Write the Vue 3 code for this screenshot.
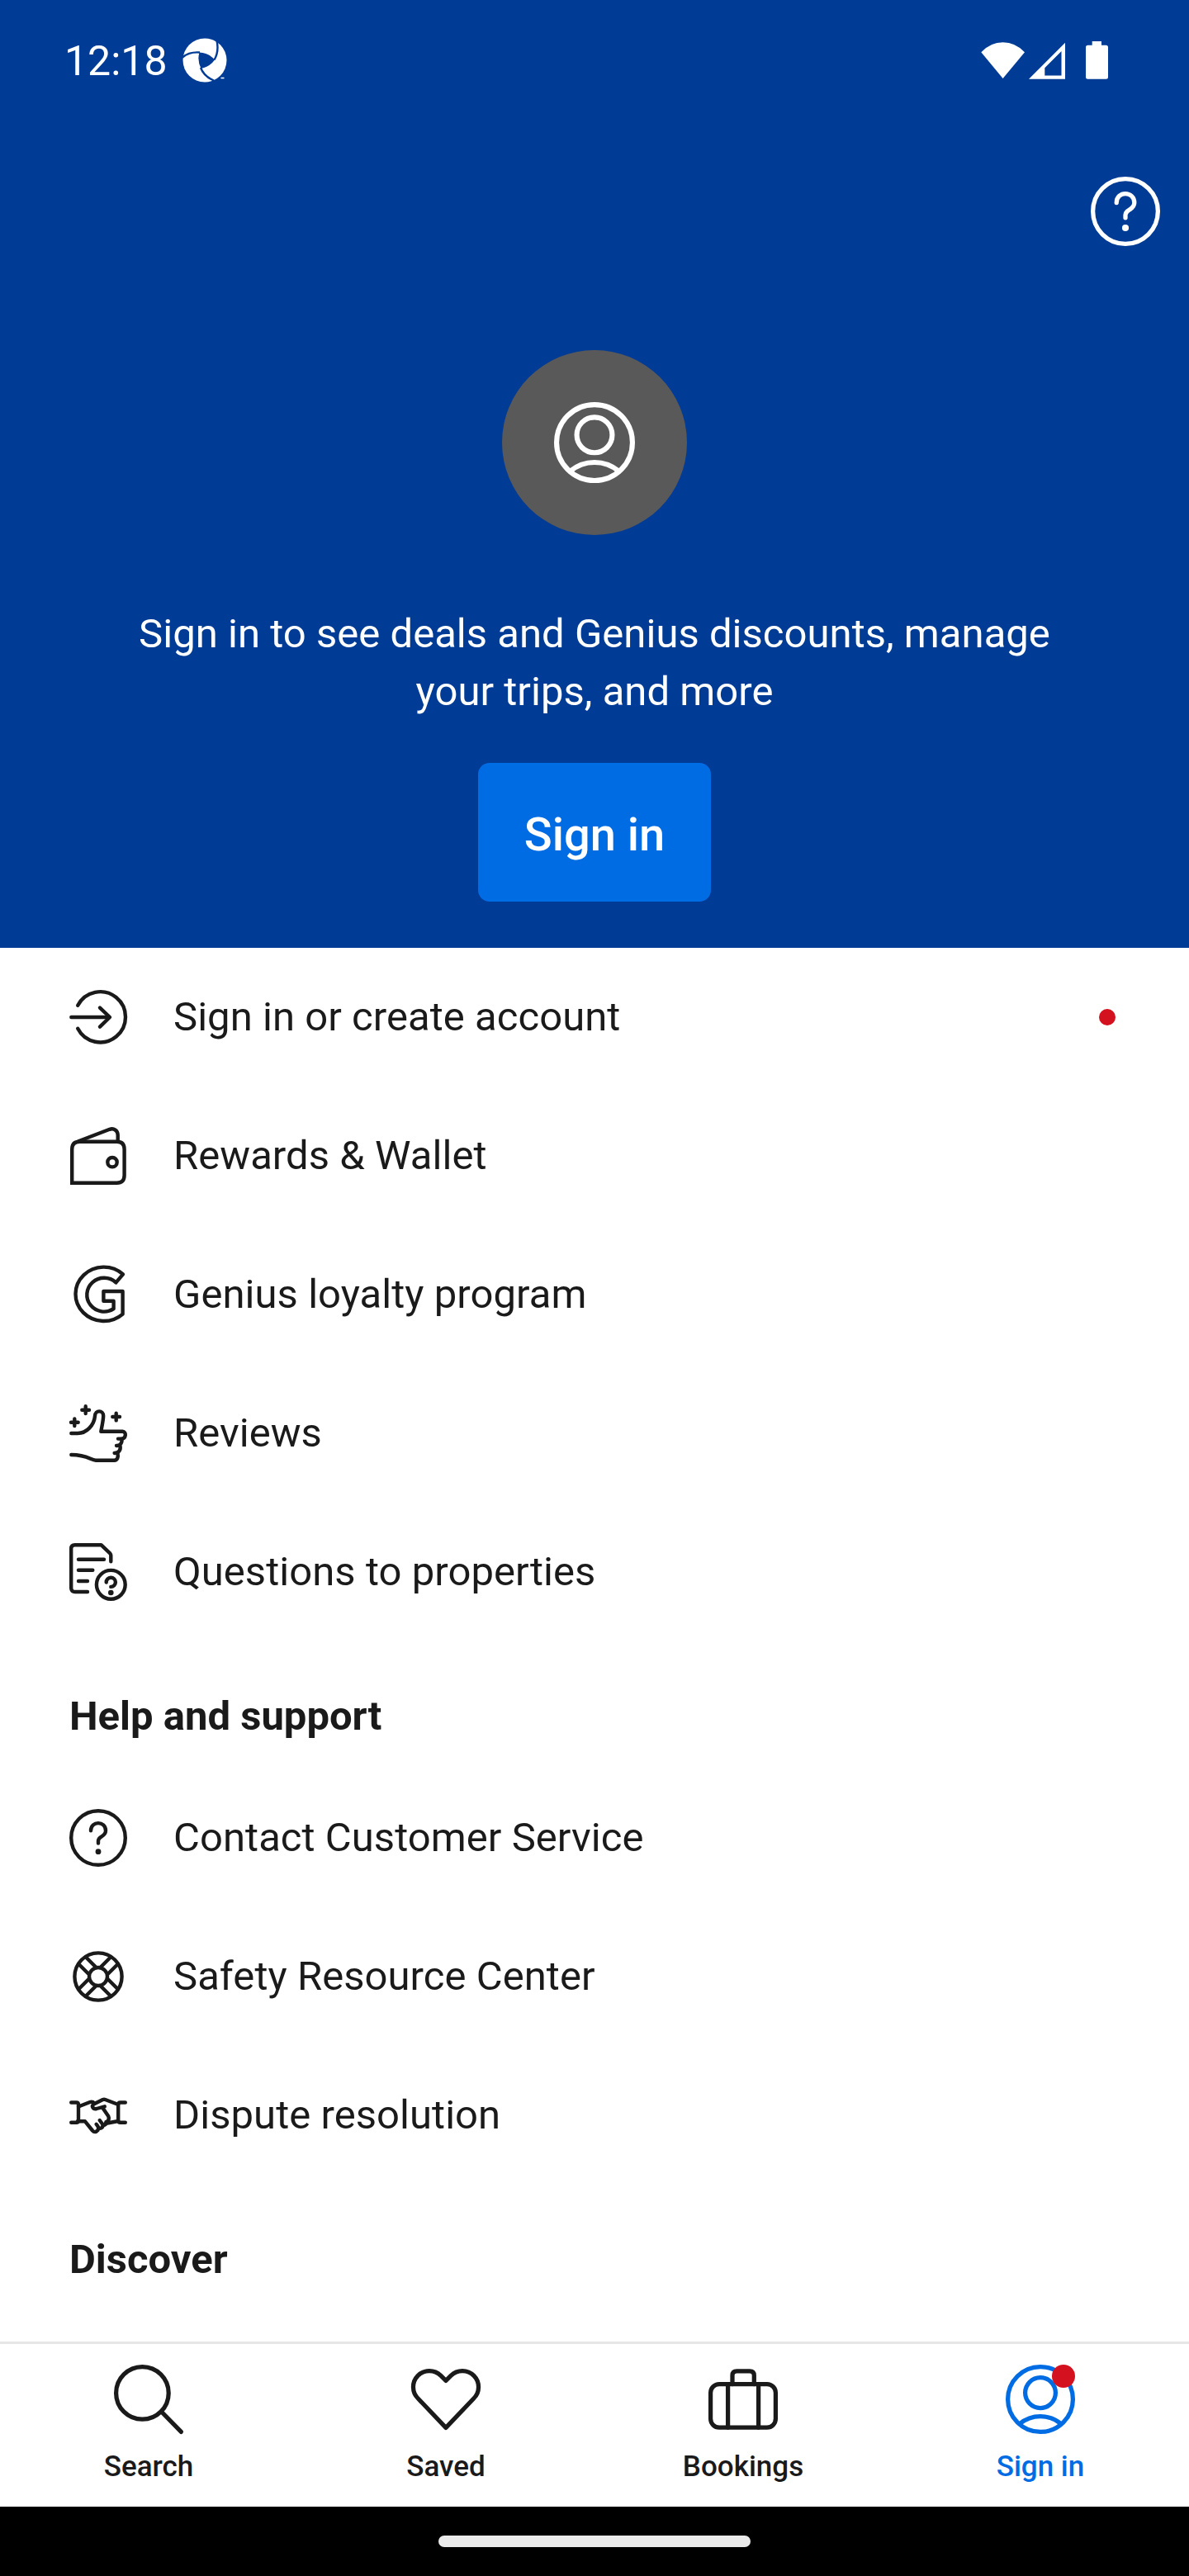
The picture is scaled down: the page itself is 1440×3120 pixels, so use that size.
<script setup>
const accountItems = [
  {
    label: 'Sign in or create account',
    badge: true,
    paths: ['M10.2 20.8A30.6 30.6 0 1 1 10.2 48.8', 'M2.3 35H48', 'M37 23.6L49 35L37 46.6']
  },
  {
    label: 'Rewards & Wallet',
    paths: [
      'M3.2 67.8V27Q3.2 17.8 12.4 17.8H57.5Q66.6 17.8 66.6 27V58.6Q66.6 67.8 57.5 67.8Z',
      'M11 17.2L48.8 2.8C54 1 58.7 4.5 58.7 9.8V17'
    ],
    circles: [[52, 42.7, 5.7]],
    miter: true
  },
  {
    label: 'Genius loyalty program',
    paths: [
      'M65 10.4A34.2 32.7 0 1 0 64.6 58.6V31H41.4V42.7H53.6V52.2A20.8 20.4 0 1 1 56.4 20.4Z'
    ]
  },
  {
    label: 'Reviews',
    paths: [
      'M19.7 2.3V11M15.3 6.7H24', 'M6.3 17.4V26.1M2 21.7H10.7', 'M56.7 10.7V19.4M52.3 15H61',
      'M2.3 35H10C21 35 30 25 31 14C31.2 6.5 41.2 6.5 41.2 14C41 20 39.5 26 38.3 32.8H64.5C69.3 33 69 41.3 63.3 41.6H59',
      'M63.3 42C64.3 46 62 49.8 57 50', 'M61.5 50.5C62.5 55 60 58.8 54.6 59',
      'M58.5 59.5C59.6 64 58 67.7 54.6 67.7H32C26 67.7 22 61 2.3 61'
    ]
  },
  {
    label: 'Questions to properties',
    paths: [
      'M22 59H7Q2.2 59 2.2 54.5V6.5Q2.2 2.2 6.5 2.2H38.5L49.5 12.7Q50.3 13.5 50.3 15V22.3',
      'M11 19.7H42', 'M11 32.7H28.3', 'M11 46H22', 'M44.7 47.5A5.6 5.6 0 1 1 50.3 52.9'
    ],
    circles: [[50.3, 50.3, 17.4]],
    dots: [[50.3, 60, 3.3]]
  }
]

const helpIcon = {
  paths: ['M26 26.3C26 13.9 44 14.3 44 26.3C44 34 35 32.5 35 38.5V41.5'],
  circles: [[35, 35, 32.8]],
  dots: [[35, 51.7, 3.4]]
}

const supportItems = [
  { label: 'Contact Customer Service', ...helpIcon },
  {
    label: 'Safety Resource Center',
    paths: [
      'M20.3 11.7L32.3 23.7M11.7 20.3L23.7 32.3',
      'M49.7 11.7L37.7 23.7M58.3 20.3L46.3 32.3',
      'M20.3 58.3L32.3 46.3M11.7 49.7L23.7 37.7',
      'M49.7 58.3L37.7 46.3M58.3 49.7L46.3 37.7'
    ],
    circles: [[35, 35, 28.6], [35, 35, 11]]
  },
  {
    label: 'Dispute resolution',
    paths: [
      'M2.2 19.5H8.5Q11 19.5 11 22V41.2Q11 43.7 8.5 43.7H2.2',
      'M67.8 19.5H61.7Q59.2 19.5 59.2 22V41.2Q59.2 43.7 61.7 43.7H67.8',
      'M11 24.5L25 19Q28 18 30.5 20.5', 'M59.2 22L43.5 16Q42 15.4 40.5 16L30 21.3C26 23.6 28.5 28 33 27L42.8 24.3',
      'M40.3 26L47.2 36Q49.5 40.5 43.5 45L59.2 42',
      'M10 42.3H19L28 53.5Q31 57 34.5 53Q36.5 50 32.6 45.8',
      'M35.5 50.5C39 51.5 41.5 49 40 45.5L36.7 41', 'M41 47Q45 47 44.5 43'
    ]
  }
]

const navItems = [
  { label: 'Search', paths: ['M58 57.5L81.4 81.4'], circles: [[34.4, 34.4, 31.8]] },
  {
    label: 'Saved',
    paths: ['M42 19.4L35.7 13.2A19.4 19.4 0 0 0 8.3 41L42 76.4L75.7 41A19.4 19.4 0 0 0 48.3 13.2Z']
  },
  {
    label: 'Bookings',
    paths: [
      'M13.1 23.6H70.9A10.5 10.5 0 0 1 81.4 34.1V65.6A10.5 10.5 0 0 1 70.9 76.1H13.1A10.5 10.5 0 0 1 2.6 65.6V34.1A10.5 10.5 0 0 1 13.1 23.6Z',
      'M23.6 23.6V76.1M60.6 23.6V76.1',
      'M29 23.6V13Q29 7.8 34.3 7.8H50Q55.3 7.8 55.3 13V23.6'
    ]
  },
  {
    label: 'Sign in',
    active: true,
    badge: true,
    paths: ['M16.8 71.8A39.2 39.2 0 0 1 67.2 71.8'],
    circles: [[42, 42, 39.4], [42, 34.1, 18.4]]
  }
]
</script>

<template>
  <div class="screen">
    <header class="hero">
      <div class="status">
        <span class="time">12:18</span>
        <svg class="app-mark" viewBox="0 0 54 54">
          <circle cx="27" cy="27" r="26.5" fill="#fff" />
          <path d="M20.5 17.5Q32 18 39 26.5Q33 35 22.5 37Q17.5 27 20.5 17.5Z" fill="#003b95" />
          <path d="M0 23.500Q8 16.500 21 17.500M38.500 26.500Q44.500 16 41.500 3M22 36Q26 46.500 38 51.500" fill="none" stroke="#003b95" stroke-width="2.4" />
          <path d="M43 49.5H54V54H40Z" fill="#003b95" />
          <path d="M46.5 48.500h4" stroke="#fff" stroke-width="1.500" />
        </svg>
        <svg class="signals" viewBox="0 0 156 48">
          <path d="M.3 14.3Q11.5 2.3 26.6 2.3T53 14.3L26.6 46Z" fill="#fff" />
          <path d="M58 46.7L102 2.7V46.7ZM77.3 33.3V42.5H97.5V13Z" fill="#fff" fill-rule="evenodd" />
          <path d="M134.7 1H146V5.7H151.5Q154 5.7 154 8.2V44.2Q154 46.7 151.5 46.7H129.5Q127 46.7 127 44.2V8.2Q127 5.7 129.5 5.7H134.7Z" fill="#fff" />
        </svg>
      </div>
      <div class="toolbar">
        <svg class="help" viewBox="0 0 70 70">
          <path v-for="d in helpIcon.paths" :key="d" :d="d" />
          <circle v-for="c in helpIcon.circles" :key="c[1]" :cx="c[0]" :cy="c[1]" :r="c[2]" />
          <circle v-for="c in helpIcon.dots" :key="c[1]" class="dot" :cx="c[0]" :cy="c[1]" :r="c[2]" />
        </svg>
      </div>
      <div class="avatar">
        <svg viewBox="0 0 24 24">
          <circle cx="12" cy="12" r="11.25" />
          <circle cx="12" cy="9.75" r="5.25" />
          <path d="M4.8 20.5A11.2 11.2 0 0 1 19.2 20.5" />
        </svg>
      </div>
      <p class="pitch">Sign in to see deals and Genius discounts, manage<br />your trips, and more</p>
      <button class="cta">Sign in</button>
    </header>

    <main class="menu">
      <div v-for="item in accountItems" :key="item.label" class="row">
        <svg class="icon" :class="{ miter: item.miter }" viewBox="0 0 70 70">
          <path v-for="d in item.paths" :key="d" :d="d" />
          <circle v-for="c in item.circles" :key="c[2]" :cx="c[0]" :cy="c[1]" :r="c[2]" />
          <circle v-for="c in item.dots" :key="c[2]" class="dot" :cx="c[0]" :cy="c[1]" :r="c[2]" />
        </svg>
        <span class="label">{{ item.label }}</span>
        <span v-if="item.badge" class="notice"></span>
      </div>
      <h2>Help and support</h2>
      <div v-for="item in supportItems" :key="item.label" class="row">
        <svg class="icon" viewBox="0 0 70 70">
          <path v-for="d in item.paths" :key="d" :d="d" />
          <circle v-for="c in item.circles" :key="c[2]" :cx="c[0]" :cy="c[1]" :r="c[2]" />
          <circle v-for="c in item.dots" :key="c[2]" class="dot" :cx="c[0]" :cy="c[1]" :r="c[2]" />
        </svg>
        <span class="label">{{ item.label }}</span>
      </div>
      <h2>Discover</h2>
    </main>

    <nav class="tabs">
      <a v-for="item in navItems" :key="item.label" class="tab" :class="{ active: item.active }">
        <svg viewBox="0 0 84 84">
          <path v-for="d in item.paths" :key="d" :d="d" />
          <circle v-for="c in item.circles" :key="c[2]" :cx="c[0]" :cy="c[1]" :r="c[2]" />
          <circle v-if="item.badge" class="tab-badge" cx="70" cy="14" r="14" />
        </svg>
        <span>{{ item.label }}</span>
      </a>
    </nav>
    <footer class="gesture"><span></span></footer>
  </div>
</template>

<style>
body {
  margin: 0;
}
</style>

<style scoped>
.screen {
  width: 1440px;
  height: 3120px;
  display: flex;
  flex-direction: column;
  overflow: hidden;
  background: #fff;
  color: #1a1a1a;
  font-family: Roboto, "Liberation Sans", sans-serif;
}
svg {
  display: block;
  flex: none;
  overflow: visible;
}
.hero {
  box-sizing: border-box;
  height: 1148px;
  flex: none;
  display: flex;
  flex-direction: column;
  align-items: center;
  background: #003b95;
  color: #fff;
}
.status {
  box-sizing: border-box;
  width: 100%;
  height: 146px;
  padding: 0 96px 0 78px;
  display: flex;
  align-items: center;
}
.time {
  padding-top: 2px;
  font-size: 50px;
  line-height: 60px;
}
.app-mark {
  width: 54px;
  height: 54px;
  margin-left: 18px;
}
.signals {
  width: 156px;
  height: 48px;
  margin-left: auto;
}
.toolbar {
  box-sizing: border-box;
  width: 100%;
  height: 278px;
  padding: 68px 35px 0 0;
  display: flex;
  justify-content: flex-end;
}
.help,
.icon,
.avatar svg,
.tab svg {
  fill: none;
  stroke: currentColor;
  stroke-width: 4.4;
  stroke-linecap: round;
  stroke-linejoin: round;
}
.help {
  width: 84px;
  height: 84px;
}
svg .dot {
  fill: currentColor;
  stroke: none;
}
.avatar {
  width: 224px;
  height: 224px;
  flex: none;
  display: flex;
  align-items: center;
  justify-content: center;
  border-radius: 50%;
  background: #595959;
}
.avatar svg {
  width: 98px;
  height: 98px;
  stroke-width: 1.5;
}
.pitch {
  margin: 85px 0 51px;
  font-size: 49px;
  line-height: 70px;
  letter-spacing: 0.03px;
  text-align: center;
  white-space: nowrap;
}
.cta {
  box-sizing: border-box;
  width: 282px;
  height: 168px;
  padding: 5px 0 0;
  border: 0;
  border-radius: 14px;
  background: #006ce4;
  color: #fff;
  font: 500 56px/70px Roboto, "Liberation Sans", sans-serif;
}
.menu {
  height: 1688px;
  flex: none;
  overflow: hidden;
}
.row {
  box-sizing: border-box;
  height: 168px;
  padding: 0 89px 0 84px;
  display: flex;
  align-items: center;
}
.icon {
  width: 70px;
  height: 70px;
}
.miter {
  stroke-linejoin: miter;
}
.label {
  margin-left: 56px;
  font-size: 49px;
  line-height: 70px;
  letter-spacing: 0.05px;
  white-space: nowrap;
}
.notice {
  width: 20px;
  height: 20px;
  margin-left: auto;
  border-radius: 50%;
  background: #d4111e;
}
h2 {
  box-sizing: border-box;
  height: 154px;
  margin: 0;
  padding: 56px 84px 0;
  font-size: 49px;
  font-weight: 700;
  line-height: 70px;
}
.tabs {
  box-sizing: border-box;
  height: 200px;
  flex: none;
  display: flex;
  border-top: 3px solid #e6e6e6;
  background: #fff;
}
.tab {
  flex: 1;
  padding-top: 25px;
  display: flex;
  flex-direction: column;
  align-items: center;
  font-size: 35px;
  font-weight: 500;
  line-height: 42px;
}
.tab svg {
  width: 84px;
  height: 84px;
  margin-bottom: 19px;
  stroke-width: 5.25;
}
.active {
  color: #006ce4;
}
svg .tab-badge {
  fill: #d4111e;
  stroke: none;
}
.gesture {
  height: 84px;
  flex: none;
  display: flex;
  align-items: center;
  justify-content: center;
  background: #000;
}
.gesture span {
  width: 378px;
  height: 14px;
  border-radius: 7px;
  background: #ebebeb;
}
</style>
